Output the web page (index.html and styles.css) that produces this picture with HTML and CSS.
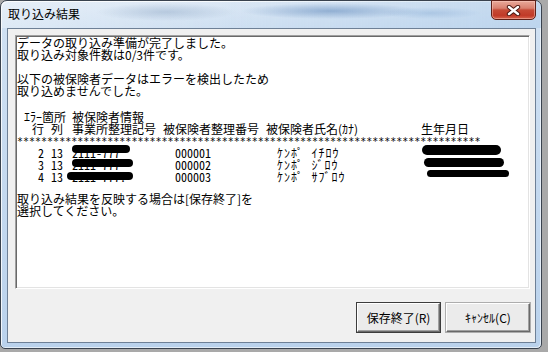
FILE: index.html
```html
<!DOCTYPE html>
<html lang="ja">
  <head>
    <meta charset="UTF-8" />
    <title>取り込み結果</title>
    <link rel="stylesheet" href="styles.css">
  </head>
  <body>
    <div class="window">
      <div class="titlebar">
        <span class="title">取り込み結果</span>
        <button class="close-btn" aria-label="閉じる">
          <svg width="15" height="11" viewBox="0 0 15 11">
            <path d="M3 2 L12 9 M12 2 L3 9" stroke="#4a1710" stroke-width="4.4" stroke-linecap="round" />
            <path d="M3 2 L12 9 M12 2 L3 9" stroke="#fff" stroke-width="2.4" stroke-linecap="round" />
          </svg>
        </button>
      </div>

      <div class="frame">
        <div class="client">
          <div class="textbox">
            <div class="line">データの取り込み準備が完了しました。</div>
            <div class="line">取り込み対象件数は0/3件です。</div>
            <div class="line"></div>
            <div class="line">以下の被保険者データはエラーを検出したため</div>
            <div class="line">取り込めませんでした。</div>
            <div class="line"></div>

            <div class="errors">
              <div class="caption"><span>ｴﾗｰ箇所</span><span>被保険者情報</span></div>

              <div class="cell right">行</div>
              <div class="cell right">列</div>
              <div class="cell office">事業所整理記号</div>
              <div class="cell">被保険者整理番号</div>
              <div class="cell">被保険者氏名(ｶﾅ)</div>
              <div class="cell">生年月日</div>

              <div class="stars">*****************************************************************************</div>

              <div class="cell right num">2</div>
              <div class="cell right num">13</div>
              <div class="cell office num">2111-777<span class="blot" style="top: -2px; left: 9px; width: 58px; height: 8px"></span></div>
              <div class="cell num pad">000001</div>
              <div class="cell pad kana">ｹﾝﾎﾟ  ｲﾁﾛｳ</div>
              <div class="cell"><span class="blot" style="top: -2px; left: 1px; width: 79px; height: 10px"></span></div>

              <div class="cell right num">3</div>
              <div class="cell right num">13</div>
              <div class="cell office num">2111-777<span class="blot" style="top: 0px; left: 9px; width: 61px; height: 8px"></span></div>
              <div class="cell num pad">000002</div>
              <div class="cell pad kana">ｹﾝﾎﾟ  ｼﾞﾛｳ</div>
              <div class="cell"><span class="blot" style="top: -1px; left: 3px; width: 80px; height: 9px"></span></div>

              <div class="cell right num">4</div>
              <div class="cell right num">13</div>
              <div class="cell office num">2111-777.<span class="blot" style="top: 1px; left: 4px; width: 66px; height: 8px"></span></div>
              <div class="cell num pad">000003</div>
              <div class="cell pad kana">ｹﾝﾎﾟ  ｻﾌﾞﾛｳ</div>
              <div class="cell"><span class="blot" style="top: -1px; left: 6px; width: 82px; height: 7px"></span></div>
            </div>

            <div class="line short"></div>
            <div class="line">取り込み結果を反映する場合は[保存終了]を</div>
            <div class="line">選択してください。</div>
          </div>

          <div class="actions">
            <button class="btn default">保存終了(R)</button>
            <button class="btn">ｷｬﾝｾﾙ(C)</button>
          </div>
        </div>
      </div>
    </div>
  </body>
</html>
```

FILE: styles.css
```css
* {
  box-sizing: border-box;
}

body {
  margin: 0;
  width: 548px;
  height: 352px;
  overflow: hidden;
  background: #a9a9a9;
  font-family: "Noto Sans CJK JP", sans-serif;
  font-size: 12px;
  color: #000;
}

/* Aero window frame */
.window {
  width: 542px;
  height: 349px;
  display: flex;
  flex-direction: column;
  border: 1px solid #39424e;
  border-radius: 7px 7px 5px 5px;
  background: linear-gradient(180deg, #dce8f5 0, #cfe0f2 28px, #bad2ec 100%);
  box-shadow: inset 1px 1px 0 rgba(255, 255, 255, 0.8),
    inset -1px -1px 0 rgba(255, 255, 255, 0.6);
}

.titlebar {
  height: 27px;
  display: flex;
  justify-content: space-between;
  align-items: flex-start;
  padding: 0 5px 0 7px;
  border-radius: 6px 6px 0 0;
  background:
    radial-gradient(ellipse 70px 9px at 165px 11px, rgba(140, 165, 195, 0.45), transparent),
    radial-gradient(ellipse 90px 8px at 330px 10px, rgba(95, 135, 185, 0.55), transparent),
    radial-gradient(ellipse 50px 6px at 430px 12px, rgba(120, 160, 205, 0.35), transparent),
    linear-gradient(90deg, rgba(255, 255, 255, 0.3) 0, transparent 40%, rgba(160, 195, 230, 0.4) 100%);
}

.title {
  margin-top: 6px;
  line-height: 14px;
  font-size: 12px;
}

.close-btn {
  margin-top: -1px;
  width: 45px;
  height: 20px;
  padding: 0;
  display: flex;
  align-items: center;
  justify-content: center;
  border: 1px solid #5e2018;
  border-radius: 0 0 5px 5px;
  background: linear-gradient(180deg, #e9a99a 0, #d9806f 40%, #c64a36 50%, #c13a28 80%, #d7634e 100%);
  box-shadow: inset 0 0 0 1px rgba(255, 210, 200, 0.45);
}

.frame {
  flex: 1;
  display: flex;
  padding: 0 5px 5px 6px;
}

.client {
  flex: 1;
  display: flex;
  flex-direction: column;
  border: 1px solid #6e8096;
  background: #f0f0f0;
  padding: 6px 5px 10px 7px;
}

/* sunken text box */
.textbox {
  height: 254px;
  flex: none;
  background: #fff;
  border: 1px solid;
  border-color: #a0a0a0 #fff #fff #a0a0a0;
  box-shadow: inset 1px 1px 0 #696969, inset -1px -1px 0 #e3e3e3;
  padding: 1px 0 0 1px;
  line-height: 12px;
}

.line {
  height: 12px;
  white-space: pre;
}

.line.short {
  height: 10px;
}

.errors {
  margin-top: 2px;
  display: grid;
  grid-template-columns: 27px 19px 100px 103px 155px 1fr;
  grid-auto-rows: 12px;
}

.caption {
  grid-column: 1 / -1;
  display: flex;
  gap: 6px;
  padding-left: 7px;
}

.stars {
  grid-column: 1 / -1;
  font-family: "DejaVu Sans Mono", monospace;
  font-size: 10px;
  line-height: 13px;
  overflow: hidden;
}

.cell {
  position: relative;
  white-space: pre;
}

.cell.right {
  text-align: right;
}

.cell.office {
  padding-left: 9px;
}

.cell.pad {
  padding-left: 12px;
}

.cell.kana {
  padding-left: 11px;
  letter-spacing: 1px;
}

.num {
  font-feature-settings: "hwid";
}

/* redaction marker over personal data */
.blot {
  position: absolute;
  background: #000;
  border-radius: 5px;
}

.actions {
  margin-top: 14px;
  display: flex;
  justify-content: flex-end;
  gap: 6px;
}

.btn {
  width: 84px;
  height: 29px;
  padding: 0;
  font-family: "Noto Sans CJK JP", sans-serif;
  font-size: 12px;
  color: #000;
  background: #ebebeb;
  border: 1px solid;
  border-color: #fff #696969 #696969 #fff;
  box-shadow: inset -1px -1px 0 #a0a0a0, 0 0 0 1px #adadad;
}

.btn.default {
  width: 83px;
  box-shadow: inset -1px -1px 0 #a0a0a0, 0 0 0 1px #3c3c3c;
}
```
